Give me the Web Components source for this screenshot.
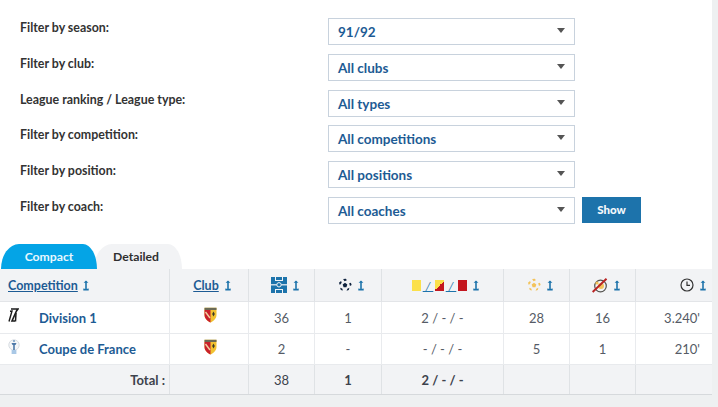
<!DOCTYPE html>
<html lang="en"><head><meta charset="utf-8"><title>Stats</title>
<style>
html,body{margin:0;padding:0;background:#eef0f1;width:718px;height:407px;overflow:hidden}
body{font-family:"Lato","Noto Sans",sans-serif;font-size:13px}
</style></head><body>
<stats-page>
  <filter-panel>
    <filter-row label="Filter by season:"><select-box>91/92</select-box></filter-row>
    <filter-row label="Filter by club:"><select-box>All clubs</select-box></filter-row>
    <filter-row label="League ranking / League type:"><select-box>All types</select-box></filter-row>
    <filter-row label="Filter by competition:"><select-box>All competitions</select-box></filter-row>
    <filter-row label="Filter by position:"><select-box>All positions</select-box></filter-row>
    <filter-row label="Filter by coach:"><select-box>All coaches</select-box><show-button>Show</show-button></filter-row>
  </filter-panel>
  <tab-bar></tab-bar>
  <stats-table></stats-table>
</stats-page>
<script>
function shadow(el, html){ el.attachShadow({mode:'open'}).innerHTML = html; }
const SORT='<svg width="6" height="11" viewBox="0 0 6 11" aria-hidden="true"><path d="M3 1.5V9.5" stroke="currentColor" stroke-width="1.6" fill="none"/><path d="M.6 2.8 3 .5 5.4 2.8zM.3 8.4 3 9 5.7 8.4V10.6H.3z" fill="currentColor"/></svg>';
const BALL=(c)=>`<svg width="14" height="14" viewBox="1 0 15 15" aria-hidden="true"><g fill="${c}"><path d="M8.5 5.2 11 7 10 9.8H7L6 7z"/><path d="M6.5 1.2 9.5.7 10.5 2.4 8 3.4z"/><path d="M2 5 4.3 3.2 5 5.2 3 7.6z"/><path d="M14.8 5 15.6 7.6 13.8 8.6 13 5.6z"/><path d="M3.3 10.5 5.5 11.2 6.3 13.4 4 12.8z"/><path d="M11 11.5 13.2 10.5 12.6 12.8 10.2 13.6z"/></g></svg>`;
const SHIELD=`<svg width="13" height="16" viewBox="0 0 13 16" aria-hidden="true"><path d="M.5 .8H12.5V8C12.5 11.5 9.5 14 6.5 15.5 3.5 14 .5 11.5 .5 8z" fill="#f1c232"/><path d="M.5 3H6.5V15.5C3.5 14 .5 11.5 .5 8z" fill="#c8202c"/><path d="M1.5 5 6 11" stroke="#f2d0a0" stroke-width="1.4"/><path d="M.5 .8H12.5V3H.5z" fill="#6b6a55"/><path d="M9.5 4.5 10.8 7 9.5 9.5 8.2 7z" fill="#3b3a24"/></svg>`;
const ICON1=`<svg width="12" height="15" viewBox="0 0 12 15" aria-hidden="true"><g fill="none" stroke="#1c1c1c"><path d="M4 1H11L9.5 3 5 13H8" stroke-width="1.6"/><path d="M2 13.5 5 3 3 3.2" stroke-width="1.4"/><path d="M9 5 8.5 13.5" stroke-width="1.5"/></g></svg>`;
const ICON2=`<svg width="14" height="16" viewBox="0 0 14 16" aria-hidden="true"><circle cx="7" cy="6" r="5.2" fill="#f4f6f8" stroke="#d8dde3"/><path d="M4.6 15V11H9.4V15z" fill="#a9c8e6"/><path d="M4.5 4H9.5L8.5 6H7.8V11H6.2V6H5.5z" fill="#4d78a8"/><circle cx="7" cy="2" r="1.1" fill="#7ea2c6"/></svg>`;
const PITCH=`<svg width="16" height="16" viewBox="0 0 16 16" aria-hidden="true"><rect width="16" height="16" fill="#1d73ab"/><g fill="#f2f3f5"><rect x="0" y="7.2" width="16" height="1.2"/><rect x="4" y="0" width="1" height="3.5"/><rect x="11" y="0" width="1" height="3.5"/><rect x="4" y="3" width="8" height="1"/><rect x="4" y="12.3" width="1" height="3.7"/><rect x="11" y="12.3" width="1" height="3.7"/><rect x="4" y="12" width="8" height="1"/></g><circle cx="8" cy="7.8" r="2.2" fill="#1d73ab" stroke="#f2f3f5"/></svg>`;
const CLOCK=`<svg width="14" height="14" viewBox="0 0 14 14" aria-hidden="true"><circle cx="7" cy="7" r="6" fill="none" stroke="#333" stroke-width="1.2"/><path d="M7 3.4V7.4H10" fill="none" stroke="#333" stroke-width="1.2"/></svg>`;
const SUBOUT=`<svg width="16" height="15" viewBox="0 0 16 15" aria-hidden="true"><circle cx="8.5" cy="8" r="5.8" fill="none" stroke="#54534f" stroke-width="1.2"/><circle cx="9" cy="8" r="3" fill="#f3c35b"/><circle cx="5" cy="5" r="1.6" fill="#f3c35b"/><path d="M.6 14 14.5 .8" stroke="#b92323" stroke-width="2"/></svg>`;

customElements.define('stats-page', class extends HTMLElement{constructor(){super();shadow(this,`<style>:host{display:flex;flex-direction:column;width:712px;height:395px;background:#fff;color:#333}</style><slot></slot>`)}});
customElements.define('filter-panel', class extends HTMLElement{constructor(){super();shadow(this,`<style>:host{display:flex;flex-direction:column;gap:8.8px;padding:18px 0 0 0;height:244px;box-sizing:border-box;flex:none}</style><slot></slot>`)}});
customElements.define('filter-row', class extends HTMLElement{constructor(){super();shadow(this,`<style>:host{display:flex;align-items:flex-start;height:27px}
.l{width:308px;margin-left:20px;font-weight:700;font-size:12.4px;line-height:18px;color:#333;margin-top:1px}
</style><div class="l">${this.getAttribute('label')}</div><slot></slot>`)}});
customElements.define('select-box', class extends HTMLElement{constructor(){super();shadow(this,`<style>:host{display:flex;align-items:center;justify-content:space-between;box-sizing:border-box;width:247px;height:27px;border:1px solid #c8d2dd;background:#fff;padding:1px 9px 0 9px;font-weight:700;font-size:13.5px;color:#1d5b94}
.a{width:0;height:0;border-left:4px solid transparent;border-right:4px solid transparent;border-top:5px solid #555;margin-top:-3px}</style><span><slot></slot></span><i class="a"></i>`)}});
customElements.define('show-button', class extends HTMLElement{constructor(){super();shadow(this,`<style>:host{display:flex;align-items:center;justify-content:center;width:59px;height:26px;margin-left:7px;background:#1d73ab;color:#f4f8fb;font-weight:900;font-size:11.5px}</style><slot></slot>`)}});
customElements.define('tab-bar', class extends HTMLElement{constructor(){super();shadow(this,`<style>:host{display:flex;height:25px;flex:none;box-sizing:border-box;font-weight:700;font-size:12.2px;line-height:25px;text-align:center}
div{position:relative}
.c{width:96px;margin-left:1px;background:#04a4e6;color:#e8f8ff;border-radius:18px 14px 0 0/25px 25px 0 0;z-index:1}
.d{width:88px;margin-left:-3px;padding-right:4px;box-sizing:border-box;background:#f2f3f5;color:#2f2f2f;border-radius:18px 14px 0 0/25px 25px 0 0}</style><div class="c">Compact</div><div class="d">Detailed</div>`)}});
customElements.define('stats-table', class extends HTMLElement{constructor(){super();
const sort=`<span class="s">${SORT}</span>`;
const cols=[
 `<a class="lk">Competition</a>${sort}`,`<a class="lk">Club</a>${sort}`,`${PITCH}${sort}`,`${BALL('#10233f')}${sort}`,
 `<span class="cards"><i class="card" style="background:#fbe04b"></i><a class="sl">&nbsp;/&nbsp;</a><i class="card" style="background:linear-gradient(135deg,#fbe04b 50%,#c3161f 50%)"></i><a class="sl">&nbsp;/&nbsp;</a><i class="card" style="background:#c3161f"></i></span>${sort}`,
 `${BALL('#f3c35b')}${sort}`,`${SUBOUT}${sort}`,`${CLOCK}${sort}`];
const head=cols.map((c,i)=>`<div class="c h ${i==0?'first':''} ${i==7?'last':''}">${c}</div>`).join('');
const row=(ic,name,vals)=>`<div class="c n"><span class="ic">${ic}</span><a class="nm">${name}</a></div><div class="c"><span class="sh">${SHIELD}</span></div>`+vals.map((v,i)=>`<div class="c ${i==5?'r':''}">${v}</div>`).join('');
shadow(this,`<style>:host{display:grid;grid-template-columns:169px 79px 66px 67px 122px 66px 66px 77px;grid-template-rows:33px 32px 31px 29px;flex:none;background:#fff;color:#555b66;font-size:13px;border-bottom:1px solid #d6d9dc;height:126px;box-sizing:border-box}
.c{display:flex;align-items:center;justify-content:center;box-sizing:border-box;border-left:1px solid #e9ebee;border-bottom:1px solid #e8eaed;min-width:0}
.n{border-left:0;justify-content:flex-start}
.h{background:#f2f3f5;gap:6px;border-bottom:1px solid #e3e5e8;border-left-color:#dfe2e5;padding:0 0 0 6px}
.first{border-left:0;justify-content:flex-start;padding-left:8px;gap:5px}
.last{justify-content:flex-end;padding-right:6px}
.lk{color:#1d5b94;font-weight:700;font-size:12.5px;text-decoration:underline}
.s{color:#1d73ab;display:inline-flex}
.cards{display:flex;align-items:center;gap:0}
.card{width:9px;height:11px;display:block}
.sl{color:#1d73ab;text-decoration:underline;font-size:12px;width:14px;text-align:center;white-space:nowrap;font-style:italic}
.ic{width:39px;padding-left:7px;box-sizing:border-box;display:inline-flex;margin-top:-4px}
.nm{color:#1d5b94;font-weight:700}
.r{justify-content:flex-end;padding-right:12px}
.t{background:#f2f3f5;color:#3d424c;border-bottom:0;border-left-color:#dfe2e5}
.b{font-weight:700}
.tl{justify-content:flex-end;padding-right:4px;font-weight:700;border-left:0}
.c svg{display:block}.sh{margin-top:-5px;margin-left:2px}
</style>${head}${row(ICON1,'Division 1',['36','1','2 / - / -','28','16',"3.240'"])}${row(ICON2,'Coupe de France',['2','-','- / - / -','5','1',"210'"])}
<div class="c t tl">Total :</div><div class="c t"></div><div class="c t">38</div><div class="c t b">1</div><div class="c t b">2 / - / -</div><div class="c t"></div><div class="c t"></div><div class="c t"></div>`)}});
</script>
</body></html>
